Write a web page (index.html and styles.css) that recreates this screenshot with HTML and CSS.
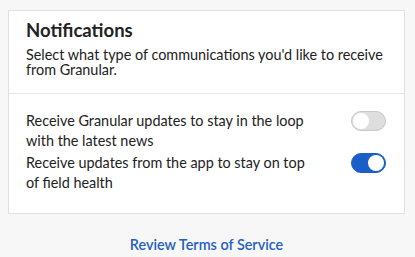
FILE: index.html
```html
<!DOCTYPE html>
<html>
<head>
<meta charset="utf-8">
<link rel="stylesheet" href="styles.css">
</head>
<body>
<div class="card">
  <div class="card-header">
    <h1 class="title">Notifications</h1>
    <p class="subtitle">Select what type of communications you'd like to receive from Granular.</p>
  </div>
  <div class="card-body">
    <div class="row">
      <span class="row-text">Receive Granular updates to stay in the loop with the latest news</span>
      <span class="toggle"><span class="knob"></span></span>
    </div>
    <div class="row">
      <span class="row-text">Receive updates from the app to stay on top of field health</span>
      <span class="toggle on"><span class="knob"></span></span>
    </div>
  </div>
</div>
<div class="footer">
  <a class="link" href="#">Review Terms of Service</a>
</div>
</body>
</html>
```
FILE: styles.css
```css
html, body {
  margin: 0;
  padding: 0;
  background: #f7f7f7;
  font-family: Lato, "Noto Sans", sans-serif;
  color: #222;
}
body {
  padding: 10px 10px 0 8px;
}
.card {
  background: #fff;
  border: 1px solid #e0e0e0;
}
.card-header {
  padding: 7px 18px 16px 17px;
  border-bottom: 1px solid #e6e6e6;
}
.title {
  margin: 0;
  font-size: 18.5px;
  font-weight: 700;
  line-height: 24px;
  color: #222;
}
.subtitle {
  margin: 6px 0 0 0;
  font-size: 14.4px;
  line-height: 14.5px;
}
.card-body {
  padding: 17px 18px 20px 17px;
  display: flex;
  flex-direction: column;
  gap: 2px;
}
.row {
  display: flex;
  align-items: flex-start;
  justify-content: space-between;
}
.row-text {
  font-size: 14.4px;
  line-height: 20px;
  width: 290px;
}
.toggle {
  position: relative;
  width: 35px;
  height: 20px;
  border-radius: 10px;
  background: #dedede;
  box-sizing: border-box;
  border: 1px solid #c8c8c8;
  flex: none;
}
.toggle .knob {
  position: absolute;
  top: 1px;
  left: 1px;
  width: 16px;
  height: 16px;
  border-radius: 50%;
  background: #fff;
}
.toggle.on {
  background: #1a5fc9;
  border-color: #1a5fc9;
}
.toggle.on .knob {
  left: auto;
  right: 1px;
}
.footer {
  text-align: center;
  padding-top: 20px;
}
.link {
  display: inline-block;
  color: #1f5fbf;
  font-size: 14.4px;
  line-height: 18px;
  font-weight: 600;
  text-decoration: none;
}
```
